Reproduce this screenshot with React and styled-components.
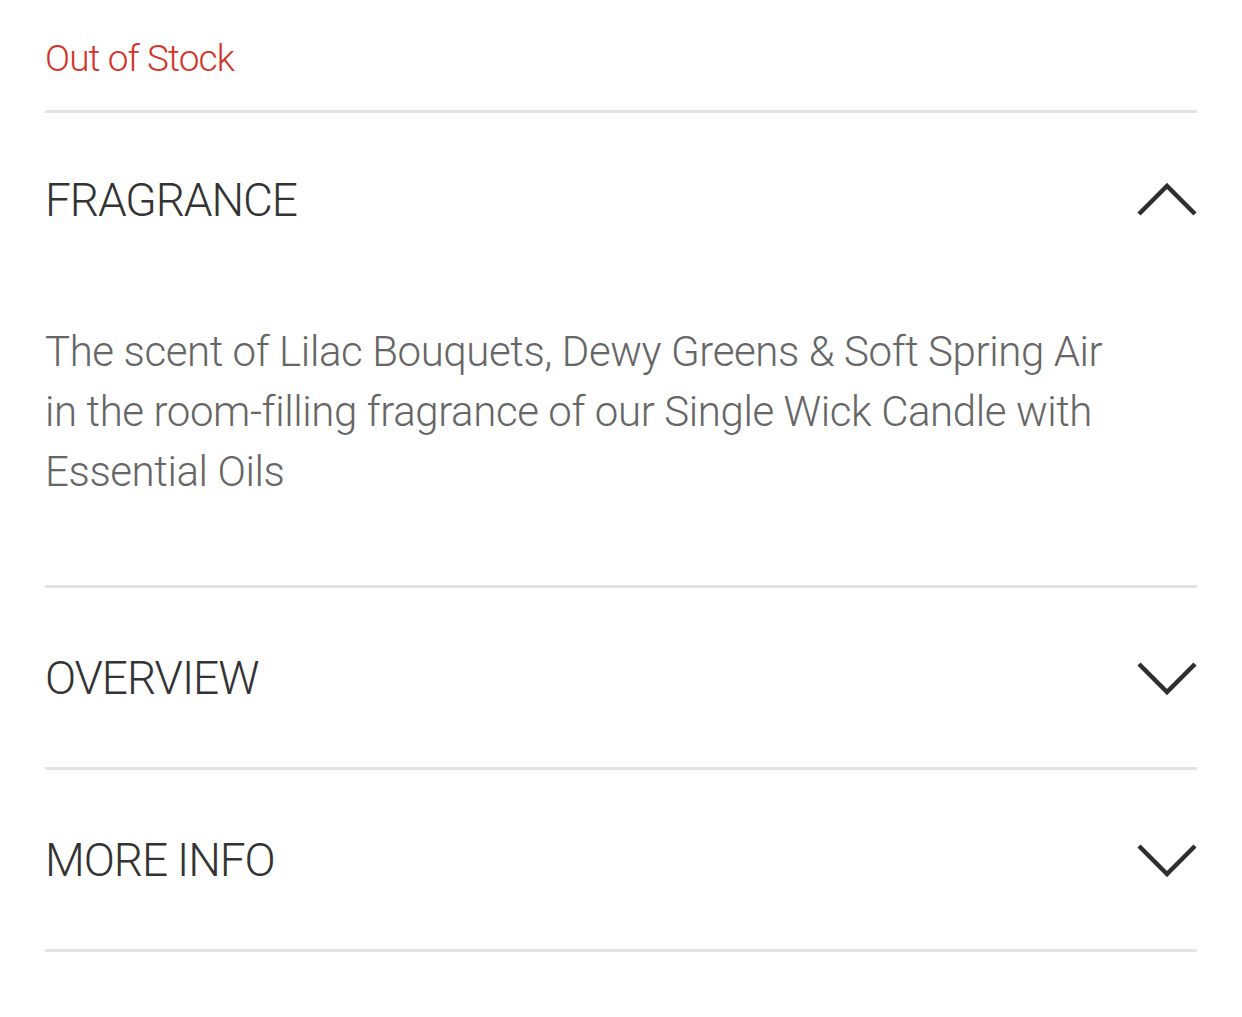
import React, { useState } from 'react'
import styled, { createGlobalStyle } from 'styled-components'

const GlobalStyle = createGlobalStyle`
  body {
    margin: 0;
    background: #fff;
    font-family: Roboto, "Liberation Sans", sans-serif;
  }
`

const Page = styled.div`
  padding: 0 45px;
`

const Stock = styled.p`
  margin: 0;
  padding-top: 37px;
  height: 110px;
  box-sizing: border-box;
  color: #d2352a;
  font-size: 37px;
  font-weight: 300;
  line-height: 44px;
  letter-spacing: -0.9px;
`

const Section = styled.div`
  border-top: 3px solid #e3e3e3;
`

const Header = styled.button`
  display: flex;
  align-items: center;
  justify-content: space-between;
  width: 100%;
  height: ${p => (p.$open ? '174px' : '179px')};
  padding: 0;
  border: 0;
  background: none;
  cursor: pointer;
  font: inherit;
`

const Title = styled.span`
  color: #333;
  font-size: 46px;
  font-weight: 300;
  letter-spacing: -1.1px;
`

const Body = styled.p`
  margin: 0;
  padding: 35px 72px 83px 0;
  color: #666;
  font-size: 42px;
  font-weight: 300;
  line-height: 60px;
  letter-spacing: -0.4px;
`

const Chevron = ({ up }) => (
  <svg width="64" height="34" viewBox="0 0 64 34" fill="none">
    <path
      d={up ? 'M6 31 L34 3 L62 31' : 'M6 3 L34 31 L62 3'}
      stroke="#2e2e2e"
      strokeWidth="4.5"
    />
  </svg>
)

const sections = [
  {
    title: 'FRAGRANCE',
    text: 'The scent of Lilac Bouquets, Dewy Greens & Soft Spring Air in the room-filling fragrance of our Single Wick Candle with Essential Oils',
  },
  { title: 'OVERVIEW', text: '' },
  { title: 'MORE INFO', text: '' },
]

export default function App() {
  const [open, setOpen] = useState('FRAGRANCE')
  return (
    <Page>
      <GlobalStyle />
      <Stock>Out of Stock</Stock>
      {sections.map(s => (
        <Section key={s.title}>
          <Header $open={open === s.title} onClick={() => setOpen(open === s.title ? null : s.title)}>
            <Title>{s.title}</Title>
            <Chevron up={open === s.title} />
          </Header>
          {open === s.title && <Body>{s.text}</Body>}
        </Section>
      ))}
      <Section />
    </Page>
  )
}
